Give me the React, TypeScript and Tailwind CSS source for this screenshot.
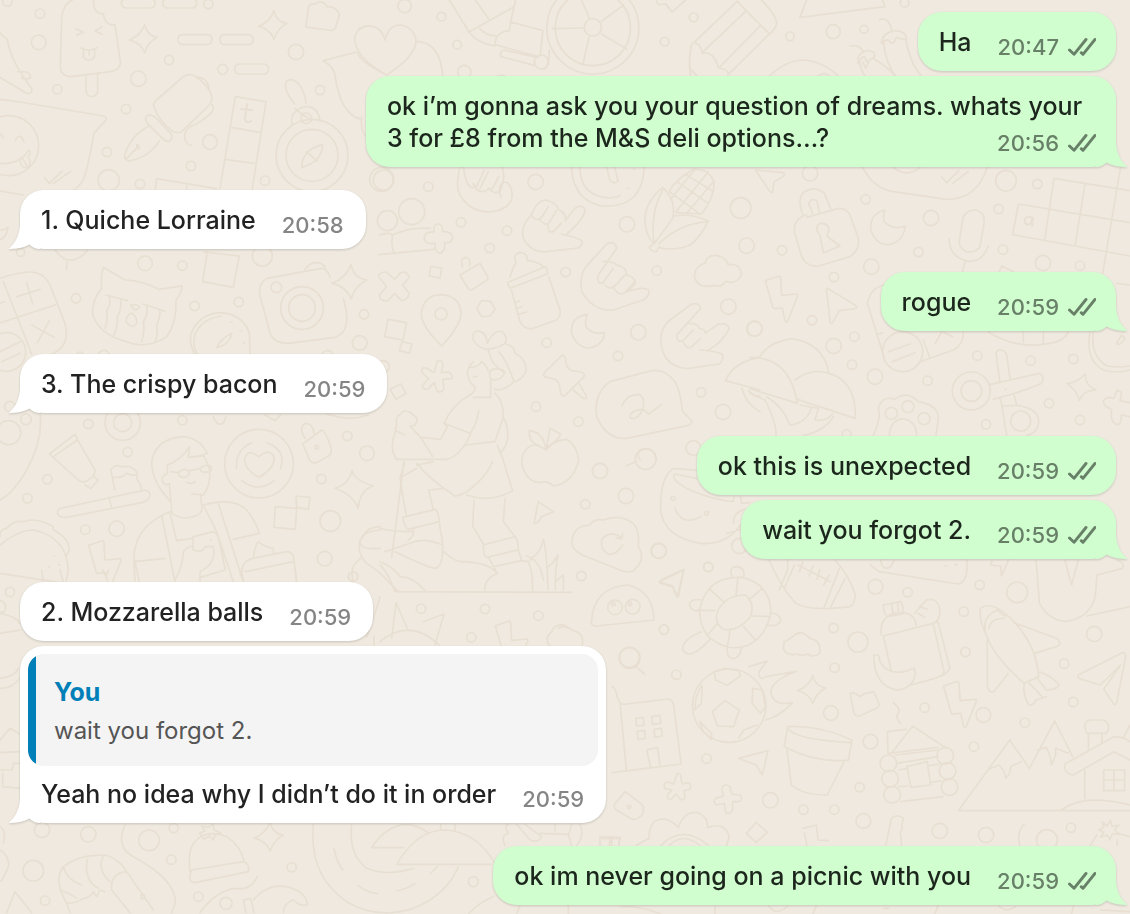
import React from 'react';
import clsx from 'clsx';

type Message = {
    id: number;
    text: string;
    time: string;
    mine: boolean;
    tail?: boolean;
    quote?: { author: string; text: string };
};

const messages: Message[] = [
    { id: 1, text: 'Ha', time: '20:47', mine: true },
    { id: 2, text: 'ok i’m gonna ask you your question of dreams. whats your 3 for £8 from the M&S deli options…?', time: '20:56', mine: true, tail: true },
    { id: 3, text: '1. Quiche Lorraine', time: '20:58', mine: false, tail: true },
    { id: 4, text: 'rogue', time: '20:59', mine: true, tail: true },
    { id: 5, text: '3. The crispy bacon', time: '20:59', mine: false, tail: true },
    { id: 6, text: 'ok this is unexpected', time: '20:59', mine: true },
    { id: 7, text: 'wait you forgot 2.', time: '20:59', mine: true, tail: true },
    { id: 8, text: '2. Mozzarella balls', time: '20:59', mine: false },
    { id: 9, text: 'Yeah no idea why I didn’t do it in order', time: '20:59', mine: false, tail: true, quote: { author: 'You', text: 'wait you forgot 2.' } },
    { id: 10, text: 'ok im never going on a picnic with you', time: '20:59', mine: true, tail: true },
];

// ---- wallpaper doodles ----

const star = (x: number, y: number, r: number) =>
    `M${x + r * 0.1} ${y - r}Q${x + r * 0.25} ${y - r * 0.2} ${x + r} ${y - r * 0.1}Q${x + r * 0.3} ${y + r * 0.25} ${x + r * 0.1} ${y + r}Q${x - r * 0.2} ${y + r * 0.25} ${x - r} ${y + r * 0.1}Q${x - r * 0.2} ${y - r * 0.2} ${x + r * 0.1} ${y - r}Z`;

const bolt = (x: number, y: number) =>
    `M${x} ${y + 14}l42-14q4 2 4 8l3 50 46-4q4 2 2 6l-30 76q-4 6-8-2l-8-38-22 2q-6 0-7-6Z`;

type Tile = { x: number; y: number; sx: number; dots: number[][]; lines: string[] };

// every tile is drawn on a grid three times finer than the page
const tiles: Tile[] = [
    {
        x: 0, y: 0, sx: 3,
        dots: [
            [22, 5, 14], [120, 41, 14], [116, 127, 22], [172, 268, 14], [415, 236, 23], [507, 180, 14], [378, 327, 14],
            [321, 456, 14], [326, 541, 32], [420, 552, 14], [573, 498, 14], [630, 426, 22], [668, 208, 15], [888, 156, 23],
            [960, 270, 14], [795, 542, 14], [625, 12, 14], [435, 790, 22], [547, 797, 14], [62, 757, 12], [787, 768, 30],
            [936, 466, 108], [936, 466, 78], [919, 355, 16], [26, 437, 90], [1150, 540, 30],
        ],
        lines: [
            // ice lolly
            'M185 50Q195-5 240-6M282-5Q275 40 310 42Q315 78 345 74L361 185Q362 210 335 214L215 230Q180 228 181 200L185 50M258 228V270Q260 290 275 290Q293 288 293 270V222',
            'M228 86L250 97L230 106M306 80L285 93L306 103M243 144Q268 158 292 143M250 150V170Q254 180 268 180Q282 178 284 166V150M267 150V165',
            star(430, 116, 42), star(818, 75, 43),
            // dashes
            'M378-5H452Q466-2 466 10Q464 24 452 24H378Q364 22 364 10Q364-2 378-5ZM502-5H576Q590-2 590 10Q588 24 576 24H502Q488 22 488 10Q488-2 502-5Z',
            'M548 104H622Q636 106 636 119Q634 133 622 134H548Q534 132 534 119Q534 105 548 104ZM674 104H746Q760 106 760 119Q758 133 746 134H674Q660 132 660 119Q660 105 674 104ZM718 192H792Q806 194 806 208Q804 221 792 222H718Q704 220 704 207Q706 193 718 192Z',
            // nib pen
            'M462 320Q458 310 470 300L550 230Q565 218 585 228Q628 258 636 290Q638 305 625 318L545 395Q530 402 515 392Q475 360 462 320ZM590 232Q620 230 628 265M636 314Q646 325 632 340Q600 370 570 380Q550 395 555 420Q562 436 574 436',
            'M440 348Q455 340 468 354L512 400Q522 412 508 424Q495 424 488 416L440 368Q434 356 440 348ZM446 378Q390 410 374 465Q372 485 392 482Q450 470 478 422M378 478L412 442M410 434Q420 436 418 446Q410 448 410 434Z',
            // scroll with a smiling face
            'M-4 298Q20 300 60 306L310 348Q324 352 316 362L282 400Q262 510 250 540Q230 570 205 580M-4 572L70 585M-4 400Q10 404 8 414M46 420Q60 395 72 426M-4 490Q60 495 86 450Q96 460 84 470M60 484Q66 508 82 502Q96 494 86 474M68 476L80 496',
            'M134 534L148 550L186 514M160 550L212 514M-4 96L22 118Q30 180 95 265Q98 284 80 280L-4 230M54 215Q92 212 92 232Q85 240 64 234',
            // scrabble column
            'M706 290L798 305L756 572M706 290L660 565M692 382L780 397M674 478L762 490M466 572L470 536L650 566M560 556V572M622 756L608 845L700 862L718 768M612 756L718 768',
            // compass
            'M876 376Q870 345 890 332Q905 318 925 320Q955 324 960 364M884 312Q850 270 858 245Q872 230 895 250Q915 275 918 310M926 355Q905 345 885 325M905 502Q905 450 968 434Q966 485 905 502ZM920 456L952 484',
            // cookie and cards
            'M918 80L925 25Q928 10 944 12L956 6Q974 4 980 20Q1010 18 1018 45L1006 85Q1000 94 985 90L925 82Q916 82 918 80Z',
            'M970 182L1070 156M970 182Q1000 200 1004 220Q1020 345 1085 358M1085 350Q1080 390 1098 410M1150 220Q1065 170 1064 115Q1070 80 1110 78Q1130 80 1145 95',
            star(1048, 845, 52),
            'M0 690Q15 690 24 682Q20 710 0 720M165 750Q210 810 262 752M200 785V808',
        ],
    },
    {
        x: 360, y: 0, sx: 2.8,
        dots: [
            [125, 18, 20], [228, 50, 13], [272, 134, 13], [292, 216, 20], [652, 84, 138], [652, 84, 113], [652, 82, 26],
            [853, 125, 13], [934, 52, 13], [1204, 109, 13], [1325, 95, 21], [1411, 88, 12], [1525, 8, 13], [508, 186, 21],
        ],
        lines: [
            'M-4 88Q10 76 30 78Q62 84 70 120Q80 75 112 75Q152 80 157 124Q155 170 75 225Q0 185-6 160M157 124Q225 125 232 230',
            'M248-4L305 96L432 20M320-4L360 56M436-4L422 66M422 66L512 92M305 96Q330 130 376 138M422 66L418 92Q380 95 378 134L500 170M512 92L505 165M335 86Q355 108 382 108M402 150L495 172M395 170L488 196M402 150Q390 155 395 170M510 206Q530 212 530 150',
            // wheel spokes
            'M620 0L642 54M738 15L676 64M748 148L676 102M624 193L642 110M538 86L624 84M380 230Q395 222 410 230',
            'M830-4Q830 20 848 12Q858 10 862 20L874 36L916-4',
            // pencil
            'M935 128L1056 4L1146 102L1030 225M958 158L1080 34M1005 204L1120 78M935 128Q955 130 958 160Q990 150 1004 204Q1025 205 1032 220M930 130Q918 170 926 230M1120-4Q1170 50 1166 72Q1164 85 1146 104M926 208L945 230',
            'M1252-4L1232 52L1470 20L1462-4M1140 235Q1190 180 1244 180Q1300 185 1346 235M1280 230Q1300 212 1316 230',
            // chillies
            'M1455 58Q1482 50 1490 96M1460 130Q1465 95 1500 92Q1530 95 1530 116M1460 130Q1480 110 1484 128Q1495 135 1502 112Q1520 120 1530 116M1466 130Q1472 190 1502 232M1528 116Q1540 190 1570 225M1372 138Q1400 132 1408 156M1395 190Q1390 155 1425 152Q1445 155 1440 172M1400 190Q1408 230 1420 232M1395 190Q1410 160 1416 176Q1414 195 1434 174Q1480 200 1500 232M1408 186L1416 205L1424 186',
        ],
    },
    {
        x: 380, y: 160, sx: 3,
        dots: [
            [145, 80, 14], [467, 66, 23], [243, 187, 14], [381, 212, 14], [329, 264, 14], [95, 155, 39], [22, 182, 30],
            [557, 336, 14], [741, 193, 23], [830, 332, 14], [1082, 144, 31], [1100, 257, 23], [1045, 440, 23], [1123, 506, 23],
            [775, 517, 23], [500, 548, 14], [714, 588, 14], [468, 740, 14], [595, 785, 14], [963, 697, 14], [1029, 756, 23],
            [183, 462, 18], [5, 58, 36], [10, 620, 18], [940, 864, 22],
        ],
        lines: [
            // hands
            'M240 20Q225 80 240 105Q270 158 335 156Q400 145 396 100Q392 65 370 66Q352 80 362 112M250 20Q260 100 290 78Q300 60 312 30M280 70Q295 110 330 85M325 84Q350 110 362 88Q378 55 366 20M300 85L325 35M335 90L356 50',
            'M455 165Q470 120 500 120Q530 130 535 148Q560 160 556 182L585 145Q605 130 616 150Q610 180 560 222M456 162Q420 200 430 235Q455 280 500 275Q560 268 595 264Q608 256 606 242Q590 232 545 222M455 168Q475 190 490 165L505 140M480 180Q500 205 512 180L530 152M505 190Q500 220 520 215L544 190',
            'M605 395Q598 345 618 320L680 252Q705 240 710 265L655 345Q648 370 668 370L700 325M605 395Q640 455 700 450L790 420Q812 405 806 390Q790 380 758 390L740 395M668 305Q690 300 710 315Q740 320 740 345Q768 350 765 372L745 392M675 375Q690 395 712 370L735 345M702 385Q715 410 735 398L765 365',
            'M842 545Q842 500 870 480L935 432Q960 428 962 445L890 525Q890 545 906 545L940 510M842 545Q850 620 920 626L1018 612Q1034 596 1026 582Q1000 572 960 570M925 490Q955 490 958 505Q980 510 976 520L1012 494Q1040 485 1048 505Q1030 545 985 570M912 548Q918 570 935 560L962 535',
            // stopwatch and corn
            'M574 22Q580 120 665 138Q790 145 792 22M600 22Q600 110 690 114Q715 112 720 106M680 22L690 62Q704 75 714 62L704 22M743 85h4M760 28h4',
            'M848 82Q790 130 795 190Q802 235 822 250L808 262Q815 275 830 275L838 258M848 82Q890 120 878 175L824 250M848 90Q810 160 822 248M880 168Q930 160 985 182Q960 235 930 255Q880 275 836 262M985 185Q900 190 838 250M868 95Q880 65 940 28Q985 25 1002 65Q1005 110 965 162L888 158M868 95L960 162M895 68L985 130M920 45L1000 95M985 35L888 155M1000 65L920 160M945 28L872 118',
            // first aid, bottle, pin
            'M0 225Q25 215 38 225Q32 255 42 278M38 225Q90 200 150 205M-4 284L162 268M162 215Q158 192 175 192Q190 195 188 215Q215 212 218 234Q215 250 194 248Q196 275 180 280Q165 278 165 250Q138 254 133 238Q132 222 145 218L162 215Z',
            'M382 368L495 320Q504 325 502 342L390 385ZM390 352Q400 318 408 310Q398 282 420 277Q445 280 442 302Q475 305 492 322M394 390L420 485Q432 508 455 506L525 482Q544 470 540 450L506 350M404 430L418 422M408 446L425 440M415 464L440 456',
            'M185 558Q124 500 124 460Q130 405 184 404Q240 408 243 460Q240 500 185 558ZM240 345L300 310L324 352Q325 358 318 362L275 390Q268 390 264 385ZM248 320Q238 295 258 292Q275 300 268 318M304 422L332 424L346 448L330 468L304 470L291 446Z',
            'M152 320L185 324L180 354L148 348ZM24 478L80 488L68 540L14 530ZM66 545L96 552L88 580L58 572ZM30 688L62 672L78 700L48 718ZM-4 345Q10 330 24 340L44 358L62 338Q80 332 88 352L68 376L88 400Q84 420 64 422L44 400L24 422Q0 425 -2 405L20 380L-4 350',
            // cloud, moons, pushpin
            'M975 310Q980 285 1008 286Q1038 290 1044 314Q1085 310 1084 345Q1070 375 1038 364Q1020 385 1002 376Q950 390 943 345Q948 315 975 310ZM622 463Q570 470 575 520Q590 565 630 564Q670 555 674 518Q635 525 618 500Q614 480 622 463Z',
            'M548 584L556 592Q556 625 575 632L604 636Q616 640 612 650L558 704Q545 712 542 700Q538 660 525 658L494 650Q486 645 495 636ZM580 690L610 716Q622 718 618 706L598 672',
            'M172 604Q190 598 188 615L184 638L205 636Q222 645 215 656L188 658L192 685Q186 700 172 694L162 668L146 686Q130 692 126 678L146 656L128 640Q120 622 138 624L162 638Z',
            // speech bubble with a scribble
            'M690 665Q640 700 650 770Q680 840 740 835L925 796Q940 790 933 780L908 755Q900 690 885 665Q855 625 815 632ZM726 738Q740 700 780 704Q800 720 785 755Q765 785 750 772Q750 750 790 748L806 762L845 733',
            // umbrella
            'M1140 592Q1060 605 1037 662L1140 690M1085 685Q1100 735 1140 755M1105 692Q1125 712 1140 708',
            // hiker
            'M318 568Q290 560 280 540Q274 510 300 514Q320 520 322 550Q340 510 365 514Q385 530 375 550Q355 565 318 568ZM378 552Q405 560 405 580Q440 595 438 635Q420 665 402 665Q380 600 356 575M280 605Q255 630 265 650Q268 670 285 680Q285 695 270 705M268 622Q290 625 305 605Q320 615 325 635M325 568Q330 610 370 636M370 630Q330 620 330 640Q325 660 345 660Q370 655 375 635M345 688Q370 695 402 665M280 650h10M332 660V712H280M270 705Q220 730 192 790L270 820Q290 795 296 752M345 700Q370 720 370 770L345 845L255 855M372 775Q400 840 360 880L352 855M272 822Q240 890 200 898H50',
            'M192 790L202 800L182 838L122 832L158 890M122 832L90 798Q110 800 112 775L95 760Q70 745 62 762Q45 770 50 790L46 812L74 824M46 815Q30 860 42 885L50 898',
            // apple
            'M498 870Q470 850 450 858Q420 880 426 915Q440 965 478 968Q505 960 520 978Q580 970 596 900Q590 855 560 838Q520 840 498 870ZM498 870Q490 815 448 812Q445 850 478 856M498 870L510 805L542 822Q535 842 500 862M780 900Q765 875 790 868Q825 860 828 900',
        ],
    },
    {
        x: 750, y: 160, sx: 3,
        dots: [
            [180, 40, 23], [347, 118, 14], [768, 62, 31], [862, 72, 14], [543, 174, 23], [746, 147, 14], [96, 271, 14],
            [364, 320, 23], [252, 351, 14], [505, 276, 14], [759, 269, 14], [879, 309, 23], [990, 317, 14], [186, 481, 14],
            [14, 506, 22], [251, 558, 23], [313, 530, 14], [306, 614, 14], [375, 650, 23], [533, 662, 14], [682, 587, 14],
            [842, 602, 14], [970, 597, 14], [897, 730, 14], [990, 780, 14], [708, 793, 14], [664, 693, 31], [664, 693, 57],
            [812, 783, 30], [424, 760, 18], [474, 740, 18], [522, 776, 18], [458, 575, 60], [290, 822, 13],
        ],
        lines: [
            'M16 30L100 38Q108 42 98 50L72 66L68 95Q64 102 58 92ZM338 22Q370 85 430 95L590 118Q680 120 712 22M430 22Q470 55 510 22M575 50L590 68L626 32M608 70L655 34',
            // padlock
            'M170 164L155 170Q125 190 136 225L155 290Q170 322 205 318L300 290Q330 270 325 235L300 165Q285 138 255 148L170 172M160 168Q140 120 160 98Q190 75 222 98L242 145M188 160L176 130Q184 112 200 122L208 155M210 226Q190 200 212 190Q240 190 236 215L230 228L270 258L220 278Z',
            'M405 150Q360 160 362 208Q375 255 418 254Q460 245 466 198Q430 212 402 185Q398 165 405 150ZM640 170Q655 148 680 150Q706 160 702 190L690 260Q675 280 650 275Q625 265 628 240ZM598 235Q595 290 655 304Q700 305 714 258M645 305L638 335',
            // crossword
            'M912 55L1140 92M805 132L1140 188M788 224L1140 288M912 55L884 240M1005 72L975 258M1112 20L1058 340M805 132L788 224M748 335L755 318L790 335M1100 370L1140 375',
            bolt(46, 348),
            'M232 385L316 436Q325 444 314 446L268 452L248 488Q240 494 240 482L230 395Q228 384 232 385ZM950 670Q980 670 1006 642Q1004 675 1038 690Q1000 690 988 722Q982 690 950 670Z',
            // calculator pill
            'M402 375Q360 385 352 430L402 590M380 525L398 518M520 540L540 595M510 605L610 570Q640 555 640 516M415 575L480 552M426 605L495 578M556 550L575 516M580 516L608 530M715 516Q800 570 900 550Q940 545 955 516M820 516V545M880 516V548M1020 516Q1005 600 1060 630Q1100 642 1140 630M1030 516Q1020 580 1065 615Q1090 625 1140 618M1100 550L1115 525L1125 535Q1110 560 1100 550Z',
            // umbrellas
            'M30 588Q60 545 125 536Q220 550 236 636M0 592Q120 590 142 730L0 686M135 660Q180 625 230 638Q320 660 316 775L142 718M0 700L45 720Q80 790 78 826M50 710Q100 740 120 795Q170 790 185 742M150 735L205 745L195 780Q230 785 248 762M160 826Q220 815 250 770',
            // paw and scissors
            'M370 826Q395 770 385 745Q395 705 435 718Q470 690 505 725Q565 735 565 775L558 826M418 826Q420 780 460 776Q500 785 500 826M718 674L868 640Q885 650 876 668Q860 682 730 718M738 580Q742 568 755 570Q768 574 770 585L780 655M738 580L750 668M755 735L770 825M755 738L800 736Q870 745 866 790Q860 820 830 826M765 688h3M750 715L758 740M792 705L800 735',
            'M1100 692Q1115 690 1114 705L1110 722L1140 728M1100 692L1092 715Q1065 708 1060 725Q1062 740 1085 748Q1078 790 1105 794Q1114 790 1114 765L1140 770',
        ],
    },
    {
        x: 0, y: 250, sx: 3,
        dots: [
            [228, 145, 14], [584, 168, 14], [716, 156, 14], [829, 112, 16], [906, 174, 64], [906, 174, 40], [1092, 193, 14],
            [1079, 279, 22], [19, 306, 58], [265, 522, 14], [383, 606, 14], [142, 688, 14], [82, 745, 14], [547, 511, 14],
            [368, 518, 53], [368, 518, 27], [26, 548, 36], [78, 508, 16], [1042, 558, 14], [1101, 610, 22], [964, 687, 14],
            [991, 813, 31], [350, 836, 23], [256, 839, 14], [777, 641, 103], [30, 470, 16], [974, 926, 22], [1059, 980, 14],
            [30, 1026, 14], [950, 592, 5],
        ],
        lines: [
            // calculator
            'M0 85Q60 65 95 66Q135 70 150 105L195 220Q205 260 190 285Q175 305 155 312M10 95L95 312M-4 220L166 165M80 98L98 162M50 140L120 118M95 225L162 262M148 212L112 278M0 160L12 155M0 305L60 275M5 335L60 310',
            // crying cat
            'M310 52L375 90Q430 92 475 118L546 108Q545 130 528 150Q530 220 500 260Q440 300 380 275Q300 255 278 195Q275 150 305 115Q302 75 310 52ZM318 135L382 152M430 162L495 184M328 140Q335 165 320 180Q325 205 315 235M362 150Q365 180 352 200Q355 225 342 255M440 166Q445 195 430 215Q435 245 425 275M480 180Q480 205 470 225Q475 250 465 278M392 165Q410 160 418 172Q405 190 392 165ZM378 215Q380 192 396 190Q412 200 410 220Q398 240 378 215Z',
            // gauge and camera
            'M585 312Q560 270 580 235Q610 188 665 188Q730 195 748 250L750 312M592 312Q570 270 595 235Q615 205 665 198M650 292Q665 265 695 250Q690 280 660 290ZM694 216h3M720 243h3M730 278h3',
            'M782 145Q770 105 800 85L965 55Q985 58 990 82M1030 145Q1045 200 1038 225Q1035 250 1005 262L865 280Q825 280 812 255L782 145M915 58Q930 35 955 38Q978 45 975 58M965 312Q985 290 1000 312M230 312Q240 300 250 312M295 310Q315 290 328 312',
            // toothpaste
            'M148 612L225 553L232 568L285 660Q285 672 278 680L262 692Q245 700 235 690ZM160 620L232 570M278 676L294 690L272 716L255 705M120 492Q130 570 80 660Q40 730 0 750M345 720L332 660Q345 640 362 650Q395 645 410 665Q408 690 420 700L426 722M338 682Q370 685 380 670Q400 680 412 672',
            'M182 775L435 720Q455 725 448 742Q440 755 425 758L200 802Q180 805 172 790Q172 778 182 775ZM328 742L334 772',
            // boy with glasses
            'M512 755Q450 690 456 630Q470 565 550 560Q600 565 622 610Q600 620 565 622L568 590Q545 630 502 645V670M568 622L612 618L628 655Q635 700 610 735L575 732M502 670Q482 680 488 695Q495 710 508 700L516 790Q540 805 560 804Q600 800 606 780L602 732M535 668Q550 652 565 662Q572 680 552 682Q535 682 535 668ZM600 655Q618 640 634 650Q638 668 618 666Q600 668 600 655ZM512 665L535 668M568 662L600 656M560 696Q575 705 585 695',
            // heart biscuit
            'M777 682Q730 655 734 625Q745 595 777 620Q810 592 822 622Q825 655 777 682ZM710 655Q705 600 755 578M800 578Q860 600 842 655M725 692Q775 730 822 692',
            'M908 582L965 540Q975 540 992 590Q998 610 985 618L950 638Q935 642 928 628ZM915 565Q895 535 915 520Q940 520 942 550',
            'M1056 660Q1060 690 1120 708Q1080 720 1074 775Q1060 735 1005 715Q1050 700 1056 660ZM888 738L930 742L925 778L890 772ZM826 770L890 775L886 838L822 832ZM1140 840Q1080 845 1080 880Q1085 900 1140 895',
            'M640 500Q650 530 670 520L678 500M795 495L825 512L842 495M980 492Q1050 515 1105 495',
            // burger
            'M0 860Q-4 840 20 835Q40 810 70 815Q110 800 160 830L160 840Q205 860 208 900L200 915M-4 890Q50 840 100 840Q200 860 205 960L198 996M0 970L195 1000M161 918h3M176 944h3M145 950h3',
            bolt(266, 872),
            // jacket and arm
            'M405 996L402 935Q400 870 440 830Q470 800 510 785M402 935L495 925M485 795L525 996M510 790L530 872L578 865M610 765L650 845L700 996M655 760L728 990M610 765Q700 740 740 780Q770 820 778 850L700 868M580 860L640 845Q650 848 655 860L676 960L600 982M578 862L580 900Q610 910 615 890L640 890Q650 940 600 965V996M525 990Q550 940 550 905Q560 890 578 888M632 870h3M406 940L418 996',
            // bottle and sandwich
            'M730 996L725 960Q730 930 760 925L860 905Q880 905 882 930L890 996M760 925Q765 885 775 875Q790 890 820 895V910M735 965L880 935M1060 996Q1045 950 1082 925M1080 870Q1070 910 1100 940Q1140 965 1160 990L1195 1025M1085 865Q1100 830 1140 830',
        ],
    },
    {
        x: 380, y: 400, sx: 3,
        dots: [
            [660, 213, 23], [738, 288, 23], [616, 313, 14], [836, 452, 23], [604, 528, 14], [985, 501, 14], [852, 688, 14],
            [123, 626, 14], [315, 627, 14], [274, 712, 14], [475, 647, 14], [748, 772, 30], [797, 177, 31], [1078, 438, 23],
            [705, 622, 22], [758, 620, 22], [700, 612, 5], [750, 612, 5], [879, 295, 6], [980, 340, 6],
        ],
        lines: [
            // hiker legs
            'M110 195L160 185M110 190Q150 240 225 288Q255 285 290 250Q320 225 338 185M360 150L398 272Q330 310 260 285M74 190L60 235L78 345M64 232L110 205M72 185L35 472M146 270L160 330M146 270L190 266M68 352L165 328Q175 330 178 365L85 388Q75 385 68 352ZM100 390Q105 405 85 420M0 385Q30 395 98 395M15 455L90 430Q130 410 188 435Q190 500 165 505Q150 505 45 455M178 370L188 430M190 455Q230 490 255 485Q330 490 352 520Q310 540 315 570',
            'M282 300L278 378L312 435M375 295L370 365L405 410M310 435L405 410Q415 420 415 450L320 472Q310 470 310 435ZM328 475L340 500L425 482M415 450L425 482L445 485Q460 520 457 572M345 505L348 518M0 485Q40 500 60 530Q100 530 135 572M0 495Q20 510 45 575L575 577M440 468Q480 480 490 540M450 480L460 470Q480 460 490 418Q500 450 504 570M505 500Q520 490 534 465Q525 510 526 570M526 545L550 525V570',
            'M765 186L738 198M475 305L520 335L484 350Q475 372 462 370Z',
            // cloud with a sync arrow
            'M578 410Q590 375 630 375Q640 355 670 360Q720 340 760 370Q780 390 775 440Q800 480 760 512Q740 520 720 510L620 470Q565 450 578 410ZM728 435Q710 465 685 462Q660 450 665 420Q680 395 712 405L725 415M728 402L724 416L708 414M912 508L895 590Q885 590 880 562L838 548Q838 540 860 532Z',
            // cup
            'M1140 310L1060 400Q1020 435 960 430Q850 410 842 330Q840 230 880 205L960 212M884 222Q870 240 930 270Q1000 300 1060 305L1062 290M884 222L950 235M884 324Q905 380 962 350M1040 400Q1080 390 1090 385M1060 370Q1060 335 1095 328M1082 290L1085 310L1110 308',
            'M634 668Q640 560 745 555Q820 575 822 660L650 678Q636 680 634 668ZM35 715L48 608L82 685M130 665L192 642L165 735M0 725Q90 650 180 738',
            bolt(346, 663),
            'M510 738Q490 715 515 695Q525 670 555 676Q575 690 580 692Q615 700 606 738M535 685Q550 675 565 685',
        ],
    },
    {
        x: 600, y: 540, sx: 2.958,
        dots: [
            [174, 33, 22], [320, 81, 14], [189, 269, 14], [226, 404, 14], [88, 354, 31], [815, 140, 22], [910, 157, 14],
            [691, 264, 14], [763, 306, 30], [694, 383, 14], [683, 519, 22], [960, 503, 14], [1076, 215, 14], [1123, 135, 14],
            [1234, 157, 31], [1081, 336, 14], [1373, 371, 14], [1462, 282, 23], [1400, 486, 14], [1134, 525, 22],
            [1257, 548, 14], [1106, 620, 14], [800, 605, 22], [768, 742, 14], [315, 656, 14], [504, 781, 23], [602, 809, 14],
            [693, 809, 14], [779, 843, 22], [1005, 873, 23], [1142, 885, 23], [1393, 863, 14], [1322, 900, 31], [382, 497, 110],
            [853, 670, 25], [858, 716, 25], [864, 764, 25], [1021, 647, 25], [1028, 693, 25], [1034, 741, 25], [86, 801, 5],
        ],
        lines: [
            'M106 380L132 402',
            // turtle
            'M320 150Q350 110 420 112Q500 130 505 210Q500 280 440 315Q380 340 320 290Q270 220 320 150ZM355 200Q380 165 430 165Q460 190 445 230Q410 275 365 268Q330 245 355 200ZM408 115L402 168M480 145L440 180M504 230L452 228M460 300L425 260M376 325L385 270M318 285L348 250M290 210L340 212M325 148L368 188M390 110Q380 80 405 80Q432 85 424 112M300 180Q265 175 265 195Q270 215 292 212M300 275Q240 300 245 330Q265 365 325 298M376 328Q375 355 395 356Q415 350 418 325M505 218Q540 225 533 245Q520 262 492 255',
            'M500 60Q540 150 580 190Q620 215 740 200Q755 190 755 165Q740 110 695 60M530 150L555 90V60M545 145L575 75M662 205L708 85M680 205L725 115M585 75L682 125M600 65L590 95M630 78L618 108M650 88L642 118M678 105L662 135',
            'M800 75L825 95L1060 132Q1090 125 1085 60M830 60Q835 95 860 80L870 62M1020 78h6M1050 74h6M1160 62L1155 75L1185 78L1188 108L1208 60',
            'M1290 62L1300 190Q1330 245 1385 244Q1450 230 1465 170L1470 105L1545 85Q1555 70 1530 60M1375 60L1395 135L1415 60M1440 228L1568 200',
            // backpack
            'M838 288L985 250L1018 395Q1015 410 980 418L920 435M838 288L862 395M832 285Q825 235 870 220Q930 210 935 255M838 195L890 185Q900 205 895 222L850 230Q838 220 838 195ZM862 190L868 225M880 188L884 220M930 220L965 180Q1000 170 1005 210Q1008 240 985 250M945 200L968 208M940 220L960 232M985 250L1000 245L1035 385Q1020 410 1000 410M810 345L824 345L828 365Q850 405 900 395L930 385Q940 440 880 450Q810 440 810 345Z',
            // rocket and paper plane
            'M1125 205Q1160 180 1215 235Q1290 310 1298 410L1255 430Q1165 350 1145 290Q1120 240 1125 205ZM1140 270Q1130 230 1175 210L1200 230M1150 265Q1155 235 1195 235M1225 248L1350 295Q1370 310 1350 320L1285 340M1145 300L1146 440Q1150 460 1165 455L1208 400M1255 430Q1250 460 1265 490Q1275 505 1290 480L1320 470M1290 410L1320 450M1270 430L1310 472M1300 395Q1340 410 1358 435Q1350 450 1320 450',
            'M1545 338L1415 405Q1410 415 1425 418L1480 435L1540 375L1490 448L1518 490Q1528 500 1530 480L1555 350Q1553 335 1545 338ZM248 90L175 125L215 138L228 170Z',
            'M545 305Q560 300 570 290Q595 265 620 295Q655 300 650 340Q630 355 615 342Q595 350 585 342Q550 350 542 325Z',
            // football with flames
            'M338 395L370 385L410 392L415 408L376 436L342 420ZM332 515L370 482L412 510L395 560L348 558ZM300 435L285 470L280 510L300 490L302 440ZM452 445L450 490L475 520L490 500L480 450ZM295 545L305 575L330 598L330 580ZM465 555L425 570L410 595M440 380L495 363L470 395Q470 425 490 410L582 394Q510 420 505 455Q510 500 570 488Q530 530 490 540',
            star(626, 448, 42),
            'M740 460L750 512Q752 530 768 528L818 505Q828 500 825 490L810 455L780 462L770 470Q750 455 740 460ZM868 488L880 500Q890 515 878 525Q878 540 890 552',
            bolt(1016, 424),
            // office block
            'M60 490Q62 494 80 492L200 477Q215 478 218 495L240 672L36 698M60 495L78 690M36 440Q50 450 50 470L60 490M106 535L128 532L130 556L108 558ZM153 530L177 526L180 550L156 553ZM110 574L132 571L134 595L112 598ZM160 568L182 565L184 588L162 592ZM150 682L138 630L170 622L178 676',
            // plant pot
            'M555 560Q650 555 745 600L735 660Q640 670 545 620ZM555 565Q580 600 742 608M553 630L566 735Q600 765 672 765L722 665M497 632L410 655L462 675L480 705Z',
            'M228 700Q242 700 240 720L245 732L262 728Q275 740 262 750L248 752L252 772Q245 785 235 775L225 762L210 778Q195 780 200 765L212 750L192 745Q185 730 200 725L218 732ZM372 735Q388 735 386 750L390 762L415 765Q425 780 410 785L392 785L392 810Q385 825 372 818L368 790L345 795Q332 785 342 775L365 768L360 745Q362 736 372 735ZM75 755L120 790Q135 800 125 825Q110 840 95 838L48 810Q38 800 45 790Z',
            'M108 916L145 895Q145 830 195 838Q215 845 232 862Q250 810 290 818Q320 830 318 862Q370 845 382 890L375 916M180 916Q245 850 320 916M205 916Q245 875 295 916M0 890L60 892L55 916M30 892L28 916M462 847L495 877L462 907L433 880ZM600 865L640 855L645 900L675 902M605 880L612 916M845 916L862 835Q880 820 898 835Q890 855 895 865Q885 880 890 890L892 916',
            // log cabin
            'M862 640L925 558L1025 625M852 640L850 575L905 568M852 640L1000 622M878 670L1000 650M885 690L908 685M885 740L910 738M890 785L1015 770M970 678L1005 672M975 728L1010 722M908 680L968 665L978 735L920 742ZM875 645L1000 630',
            // mountains and hut
            'M1568 812H1060L1212 600L1270 685L1345 543L1398 650M1145 690L1180 675Q1200 695 1200 715Q1215 700 1215 680L1245 665M1295 630L1320 622Q1335 650 1335 675Q1350 650 1348 625L1385 640M1375 672L1520 590Q1550 590 1568 605M1375 672Q1370 700 1400 705L1520 635L1568 660M1434 690V775M1365 810Q1430 760 1568 795M1490 690H1552V752H1490ZM1520 690V752M1490 720H1552M1445 630V580M1485 610V580M1440 580Q1425 545 1450 540H1490Q1515 555 1498 580ZM1550 590L1568 555',
            'M1475 870L1490 862L1485 845L1500 858L1510 840L1515 860L1535 855L1522 870L1535 882L1515 882L1508 900L1500 885L1480 892L1490 876ZM1450 916L1470 885M1255 852Q1230 880 1242 916M1530 880L1568 890M1530 916V900',
            'M60 1100Q120 1096 180 1122M340 1098V1122M500 1098Q520 1130 555 1098M640 1098L630 1122M840 1105h14M1000 1098L990 1122M1180 1098Q1200 1120 1230 1100M1400 1100L1395 1122M1480 1110L1568 1115',
        ],
    },
    {
        x: 0, y: 570, sx: 3,
        dots: [
            [126, 780, 23], [265, 793, 23], [447, 811, 31], [521, 774, 14], [514, 869, 14], [875, 892, 14], [595, 980, 14],
            [100, 902, 31], [135, 992, 14], [428, 980, 6], [1059, 20, 14], [678, 1000, 18],
        ],
        lines: [
            star(806, 800, 44),
            'M125 0L130 36M180 0L190 36M308 0L318 20L326 0M720 10L732 36M885 0L890 36M0 92Q20 95 16 120Q10 130 0 126M0 130Q50 140 60 160M0 190L60 180M0 325Q45 320 55 295M0 355Q40 355 58 325M0 510L30 475L60 492M0 548L60 545M0 600H36L40 580H60M8 610V650L60 655M1140 80Q1120 150 1100 200M1122 200V225',
            // croissant
            'M200 1000Q160 930 190 890Q240 850 320 856Q360 870 380 905L460 1020M190 890Q200 930 245 945M262 868Q250 930 295 955M310 858Q290 900 330 935M380 905Q330 910 335 960L390 1028M200 1000Q230 1000 250 985Q270 985 280 965L290 980L300 960L315 965M180 960Q210 970 230 985M200 1000L210 1028M375 765Q345 830 400 860Q530 930 526 1000L515 1028M20 1028L45 965L95 1028',
            // beanie
            'M570 905Q560 830 595 805Q630 780 680 800Q725 830 732 875M575 900L730 875Q750 880 745 905L585 938Q560 935 575 900ZM598 790L615 782L605 768L625 772L640 762L642 780L662 788L645 795L640 810L628 798L612 808Z',
            // banjo and wrench
            'M600 1028Q640 970 700 955Q750 965 772 920M730 990L752 985L762 1028M730 990L738 1028M760 990Q800 940 860 950Q920 965 922 1005Q900 1010 880 990Q850 1000 850 1028',
            'M0 770Q20 780 10 820M0 840Q30 860 25 890Q10 930 0 935',
        ],
    },
    {
        x: 200, y: 815, sx: 3,
        dots: [[820, 200, 15]],
        lines: [
            // plate and hats
            'M340 28Q325 180 440 260Q530 315 640 280Q740 240 775 155M455 28Q445 120 500 160Q560 185 640 160M402 100Q410 140 428 165M475 212Q500 232 532 236M590 228Q620 222 645 206M692 175L712 155M515 98Q560 28 625 28Q665 35 685 55M515 98H610M590 148Q650 45 735 45Q830 50 885 145M590 148H875M722 28V44M765 28V46M915 92Q900 60 925 55Q910 30 925 28M975 28L1025 65Q1015 85 990 75L950 28M1020 55L1105 58M1065 28V52M1140 28Q1155 60 1130 92M1115 28L1105 60L1115 92M1200 70H1258V92M1200 70V92M1235 68V92M805 297Q840 260 880 245M960 272L950 297M1105 272V297',
        ],
    },
];

const Wallpaper: React.FC = () => (
    <svg
        className="absolute inset-0 h-full w-full"
        viewBox="0 0 1130 914"
        preserveAspectRatio="xMinYMin slice"
        fill="none"
        stroke="#e8dfd2"
        strokeWidth="5"
        strokeLinecap="round"
        strokeLinejoin="round"
        aria-hidden="true"
    >
        {tiles.map((tile, i) => (
            <g key={i} transform={`translate(${tile.x} ${tile.y}) scale(${1 / tile.sx} ${1 / 3})`}>
                {tile.dots.map(([cx, cy, r], j) => (
                    <ellipse key={j} cx={cx} cy={cy} rx={(r * tile.sx) / 3} ry={r} />
                ))}
                {tile.lines.map((d, j) => (
                    <path key={j} d={d} />
                ))}
            </g>
        ))}
        <path d="M247 104L245 119Q246 124 251 121M241 109L252 110M1032 218Q1024 214 1025 223Q1030 228 1033 218L1032 226" strokeWidth="2" />
    </svg>
);

// ---- bubbles ----

const Ticks: React.FC = () => (
    <svg className="h-[18px] w-7" viewBox="0 0 28 18" fill="none" stroke="currentColor" strokeWidth="2.9" strokeLinecap="round" strokeLinejoin="round" role="img" aria-label="Delivered">
        <path d="M1.5 12L6 16.3L18 1.5M13.2 14.7L15 16.3L27 1.5" />
    </svg>
);

const Tail: React.FC<{ mine: boolean }> = ({ mine }) => (
    <svg
        className={clsx('absolute bottom-0 h-6 w-8', mine ? '-right-3 text-[#d0fecf]' : '-left-3 -scale-x-100 text-white')}
        viewBox="0 0 32 24"
        fill="currentColor"
        aria-hidden="true"
    >
        <path d="M20 0C20.5 9 24 18 31.5 24C23 24 16 22.5 10.5 19.5C7 22.5 4 24 0 24V0Z" />
    </svg>
);

const Bubble: React.FC<{ message: Message }> = ({ message }) => {
    const { text, time, mine, tail, quote } = message;

    return (
        <div
            className={clsx(
                'relative max-w-[750px] rounded-3xl drop-shadow-[0_1px_1px_rgba(0,0,0,0.16)]',
                mine ? 'bg-[#d0fecf] text-[#1c261c]' : 'bg-white text-[#222222]'
            )}
        >
            {tail && <Tail mine={mine} />}
            {quote && (
                <div className="px-2 pt-2">
                    <blockquote className="relative flex h-28 overflow-hidden rounded-2xl bg-[#f4f4f4]">
                        <div className="w-2 bg-[#007fb8]"></div>
                        <div className="px-[18px] pt-5">
                            <p className="text-[25px] leading-9 font-bold text-[#007fb8]">{quote.author}</p>
                            <p className="text-2xl leading-[42px] text-[#555555]">{quote.text}</p>
                        </div>
                    </blockquote>
                </div>
            )}
            <p className={clsx('relative pb-[13px] pl-[21px] text-[25px] leading-8 font-[450]', quote ? 'pt-3' : 'pt-[14px]', mine ? 'pr-5' : 'pr-[22px]')}>
                {text}
                <span className={clsx('float-right mt-[5px] ml-[26px] flex items-center gap-[9px] text-[22px]', mine ? 'text-[#688068]' : 'text-[#858585]')}>
                    <time>{time}</time>
                    {mine && <Ticks />}
                </span>
            </p>
        </div>
    );
};

const App: React.FC = () => {
    return (
        <main className="relative min-h-screen overflow-hidden bg-[#efe9df] font-['Inter','Liberation_Sans',sans-serif]">
            <Wallpaper />
            <ol className="relative flex flex-col pt-3 pr-[14px] pb-2 pl-5">
                {messages.map((message, i) => {
                    const previous = messages[i - 1];
                    const grouped = previous && previous.mine === message.mine;
                    return (
                        <li
                            key={message.id}
                            className={clsx('flex', message.mine ? 'justify-end' : 'justify-start', previous && (grouped ? 'mt-[5px]' : 'mt-[23px]'))}
                        >
                            <Bubble message={message} />
                        </li>
                    );
                })}
            </ol>
        </main>
    );
};

export default App;
